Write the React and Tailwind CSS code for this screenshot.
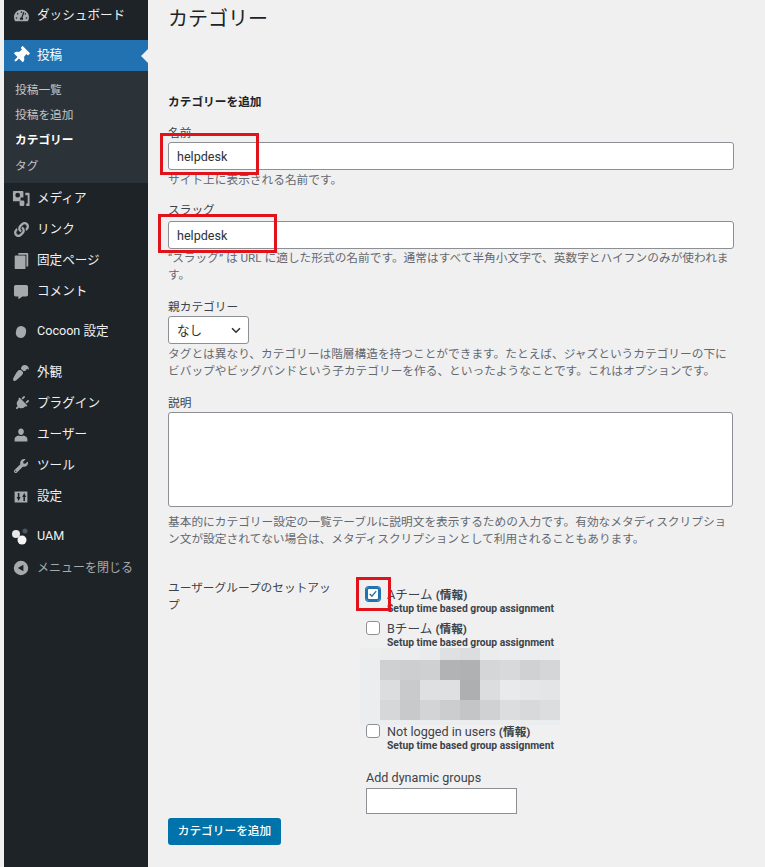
import { FaThumbtack, FaLink, FaPaintBrush, FaPlug, FaWrench, FaTachometerAlt, FaCommentAlt } from "react-icons/fa";

const font = { fontFamily: 'Roboto, "Noto Sans CJK JP", sans-serif' };

function MediaIcon() {
  return (
    <svg viewBox="0 0 20 20" className="h-[19px] w-[19px]" fill="currentColor">
      <path fillRule="evenodd" d="M1 3a1 1 0 0 1 1-1h9a1 1 0 0 1 1 1v6H9v4H2a1 1 0 0 1-1-1zm5 1a2.500 2.500 0 1 0 0 5 2.500 2.500 0 0 0 0-5z" />
      <rect x="8" y="12" width="5" height="6" rx="1.500" />
      <path d="M14 4h3.500a1 1 0 0 1 1 1v12a1 1 0 0 1-1 1H15v-2.500l1.500-.5V6.500H14z" />
    </svg>
  );
}

function PagesIcon() {
  return (
    <svg viewBox="0 0 20 20" className="h-[18px] w-[18px]" fill="currentColor">
      <path d="M7 1h10a1 1 0 0 1 1 1v14h-2V3H7z" />
      <path d="M3 5a1 1 0 0 1 1-1h10a1 1 0 0 1 1 1v13a1 1 0 0 1-1 1H4a1 1 0 0 1-1-1z" />
    </svg>
  );
}

function SettingsIcon() {
  return (
    <svg viewBox="0 0 20 20" className="h-[16px] w-[16px]" fill="currentColor">
      <path fillRule="evenodd" d="M2 3h16v14H2zM6 5v5H4.500L7 15l2.500-5H8V5zm5.500 5L14 5l2.500 5H15v5h-2v-5z" />
    </svg>
  );
}

function UserIcon() {
  return (
    <svg viewBox="0 0 20 20" className="h-[16px] w-[16px]" fill="currentColor">
      <path d="M10 2c2.200 0 3.500 1.700 3.500 3.800S12 10 10 10 6.500 7.900 6.500 5.800 7.800 2 10 2z" />
      <path d="M7 10.500c1.800 1.200 4.200 1.200 6 0 2.500.6 5 2 5 4.500v3H2v-3c0-2.500 2.500-3.900 5-4.500z" />
    </svg>
  );
}

function CircleIcon() {
  return <span className="block h-[12px] w-[10px] rotate-12 rounded-full bg-[#a7aaad]" />;
}

function UamIcon() {
  return (
    <svg viewBox="0 0 20 20" className="h-[20px] w-[20px]">
      <circle cx="5" cy="7" r="4" fill="#e8e8e8" />
      <circle cx="11" cy="13" r="4.500" fill="#f4f4f4" />
      <circle cx="14" cy="4" r="2.500" fill="#50565c" />
    </svg>
  );
}

function CollapseIcon() {
  return (
    <svg viewBox="0 0 20 20" className="h-[16px] w-[16px]" fill="#a7aaad">
      <path fillRule="evenodd" d="M10 1a9 9 0 1 1 0 18 9 9 0 0 1 0-18zm3 5-7 4 7 4z" />
    </svg>
  );
}

function MenuRow({ icon, label, className = "" }) {
  return (
    <div className={`flex h-[31px] items-center text-[12.6px] text-[#f0f0f1] ${className}`}>
      <span className="flex w-[33px] shrink-0 items-center justify-center pl-[1px] text-[#a7aaad]">{icon}</span>
      <span>{label}</span>
    </div>
  );
}

function Sidebar() {
  return (
    <div className="ml-[4px] w-[144px] shrink-0 bg-[#1d2327]">
      <MenuRow icon={<FaTachometerAlt size={15} />} label="ダッシュボード" />
      <div className="relative mt-[9px] flex h-[31px] items-center bg-[#2271b1] text-[12.6px] text-white">
        <span className="flex w-[33px] shrink-0 items-center justify-center text-white"><FaThumbtack size={17} className="rotate-45" /></span>
        <span>投稿</span>
        <span className="absolute right-0 top-[9px] h-0 w-0 border-y-[7px] border-r-[7px] border-y-transparent border-r-[#f0f0f1]" />
      </div>
      <div className="bg-[#2c3338] pb-[5px] pl-[11px] pt-[7px] text-[11.7px] text-[#c3c4c7]">
        <div className="flex h-[25px] items-center">投稿一覧</div>
        <div className="flex h-[25px] items-center pt-[1px]">投稿を追加</div>
        <div className="flex h-[25px] items-center pt-[1px] font-bold text-white">カテゴリー</div>
        <div className="flex h-[25px] items-center pt-[2px]">タグ</div>
      </div>
      <MenuRow icon={<MediaIcon />} label="メディア" />
      <MenuRow icon={<FaLink size={15} />} label="リンク" />
      <MenuRow icon={<PagesIcon />} label="固定ページ" />
      <MenuRow icon={<FaCommentAlt size={14} />} label="コメント" />
      <MenuRow className="mt-[9px]" icon={<CircleIcon />} label="Cocoon 設定" />
      <MenuRow className="mt-[10px]" icon={<FaPaintBrush size={16} className="rotate-180" />} label="外観" />
      <MenuRow icon={<FaPlug size={15} className="rotate-45" />} label="プラグイン" />
      <MenuRow icon={<UserIcon />} label="ユーザー" />
      <MenuRow icon={<FaWrench size={14} />} label="ツール" />
      <MenuRow icon={<SettingsIcon />} label="設定" />
      <MenuRow className="mt-[9px]" icon={<UamIcon />} label="UAM" />
      <div className="flex h-[31px] items-center text-[12px] text-[#a7aaad]">
        <span className="flex w-[33px] shrink-0 items-center justify-center"><CollapseIcon /></span>
        <span>メニューを閉じる</span>
      </div>
    </div>
  );
}

function RedBox({ className }) {
  return <span className={`pointer-events-none absolute border-[3px] border-[#e2121b] ${className}`} />;
}

const textInput = "block h-[28px] w-[566px] rounded-[3px] border border-[#8c8f94] bg-white px-[8px] text-[12.6px] text-[#2c3338]";

// pixelated block, row by row
const mosaic = [
  ["#eceded", "#ececed", "#ecedee", "#eaebec", "#dfe0e1", "#dcddde", "#ebecec", "#ecedee", "#ecedee", "#ecedee"],
  ["#ecedee", "#cfd0d1", "#cdcecf", "#cfd0d1", "#b2b3b5", "#b0b1b3", "#d5d6d7", "#d8d9da", "#d0d1d2", "#d5d6d7"],
  ["#ecedee", "#dcddde", "#c9cacb", "#dfe0e1", "#dfe0e1", "#aeafb1", "#dcddde", "#e9eaeb", "#e6e7e8", "#e4e5e6"],
  ["#ecedee", "#d6d7d8", "#c8c9ca", "#d3d4d5", "#cccdce", "#c4c5c6", "#d0d1d2", "#dcddde", "#d8d9da", "#dcddde"],
  ["#ecedee", "#ecedee", "#ecedee", "#ecedee", "#ecedee", "#ecedee", "#ecedee", "#ecedee", "#ecedee", "#ecedee"],
];

function Mosaic() {
  return (
    <div className="-ml-[6px] mt-[2px] grid h-[77px] w-[200px] grid-cols-10 grid-rows-[12px_20px_20px_20px_5px]">
      {mosaic.flat().map((c, i) => (
        <div key={i} style={{ backgroundColor: c }} />
      ))}
    </div>
  );
}

function Group({ label, checked }) {
  return (
    <div className="flex h-[34px]">
      <span className="relative mt-[9px] flex h-[14px] w-[14px] shrink-0 items-center justify-center rounded-[3px] bg-white">
        {checked ? (
          <span className="flex h-[14px] w-[14px] items-center justify-center rounded-[3px] border-2 border-[#2271b1] shadow-[0_0_0_1px_#2271b1]">
            <svg viewBox="0 0 14 14" className="h-[12px] w-[12px]" fill="none" stroke="#2271b1" strokeWidth="2"><path d="M2.500 7l3 3 6-7" /></svg>
          </span>
        ) : (
          <span className="h-[14px] w-[14px] rounded-[3px] border border-[#8c8f94]" />
        )}
      </span>
      <div className="ml-[7px]">
        <div className="mt-[9px] h-[16px] text-[12.6px] leading-[16px] text-[#3c434a]">
          {label} <b className="text-[11.7px]">(情報)</b>
        </div>
        <div className="whitespace-nowrap text-[10.3px] font-bold leading-[12px] text-[#3c434a]">Setup time based group assignment</div>
      </div>
    </div>
  );
}

function Form() {
  return (
    <div className="relative flex-1 pl-[20px] text-[11.7px] leading-[17px] text-[#3c434a]">
      <h1 className="pt-[5px] text-[20px] leading-[28px] text-[#1d2327]">カテゴリー</h1>
      <h2 className="mt-[61px] text-[11.7px] font-bold leading-[17px] text-[#1d2327]">カテゴリーを追加</h2>
      <div className="mt-[14px]">名前</div>
      <input className={textInput} readOnly value="helpdesk" />
      <div className="mt-[2px] text-[#646970]">サイト上に表示される名前です。</div>
      <div className="mt-[13px]">スラッグ</div>
      <input className={`mt-[2px] ${textInput}`} readOnly value="helpdesk" />
      <div className="w-[566px] pt-[1px] text-[#646970]">“スラッグ” は URL に適した形式の名前です。通常はすべて半角小文字で、英数字とハイフンのみが使われます。</div>
      <div className="mt-[15px]">親カテゴリー</div>
      <div className="flex h-[28px] w-[81px] items-center justify-between rounded-[3px] border border-[#8c8f94] bg-white pl-[8px] pr-[5px] text-[12.6px] text-[#2c3338]">
        <span>なし</span>
        <svg viewBox="0 0 16 16" className="h-[14px] w-[14px]" fill="none" stroke="#2c3338" strokeWidth="1.800"><path d="M3.500 6l4.500 4.500L12.500 6" /></svg>
      </div>
      <div className="mt-[2px] w-[565px] text-[#646970]">タグとは異なり、カテゴリーは階層構造を持つことができます。たとえば、ジャズというカテゴリーの下にビバップやビッグバンドという子カテゴリーを作る、といったようなことです。これはオプションです。</div>
      <div className="mt-[15px]">説明</div>
      <div className="h-[95px] w-[565px] rounded-[3px] border border-[#8c8f94] bg-white" />
      <div className="mt-[7px] w-[565px] text-[#646970]">基本的にカテゴリー設定の一覧テーブルに説明文を表示するための入力です。有効なメタディスクリプション文が設定されてない場合は、メタディスクリプションとして利用されることもあります。</div>
      <div className="mt-[30px] flex">
        <div className="w-[198px] shrink-0 pr-[26px] pt-[2px] text-[#3c434a]">ユーザーグループのセットアップ</div>
        <div>
          <Group label="Aチーム" checked />
          <Group label="Bチーム" />
          <Mosaic />
          <div className="-mt-[10px]"><Group label="Not logged in users" /></div>
          <div className="mt-[20px] text-[12.6px]">Add dynamic groups</div>
          <div className="mt-[2px] h-[26px] w-[151px] border border-[#8c8f94] bg-white" />
        </div>
      </div>
      <div className="mt-[4px] flex h-[27px] w-[113px] items-center justify-center rounded-[3px] bg-[#0073aa] text-[11.7px] font-medium text-white">カテゴリーを追加</div>
      <RedBox className="left-[12px] top-[133px] h-[42px] w-[99px]" />
      <RedBox className="left-[10px] top-[214px] h-[39px] w-[119px]" />
      <RedBox className="left-[208px] top-[577px] h-[34px] w-[35px]" />
    </div>
  );
}

export default function App() {
  return (
    <div style={font} className="flex h-[867px] overflow-hidden bg-[#f0f0f1]">
      <Sidebar />
      <Form />
    </div>
  );
}
